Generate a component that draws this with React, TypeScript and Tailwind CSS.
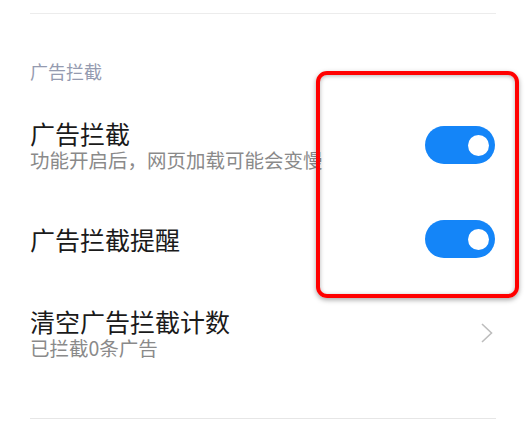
import React from 'react';

const font = { fontFamily: '"Noto Sans CJK SC", "Noto Sans", sans-serif' };

const Toggle = () => (
  <div className="w-[70px] h-[38px] rounded-full bg-[#1485f8] flex items-center justify-end pr-[6px]">
    <div className="w-[21px] h-[21px] rounded-full bg-white" />
  </div>
);

const Row = ({ title, sub, right }: { title: string; sub?: string; right: React.ReactNode }) => (
  <div className="h-[94px] flex items-center justify-between">
    <div className="flex flex-col">
      <span className="text-[25px] leading-[30px] text-[#1a1a1a]">{title}</span>
      {sub && <span className="text-[19.5px] leading-[24px] text-[#8a8a8a]">{sub}</span>}
    </div>
    {right}
  </div>
);

const Chevron = () => (
  <svg width="14" height="22" viewBox="0 0 14 22" className="mr-[1px]">
    <path d="M2 2 L11.5 11 L2 20" fill="none" stroke="#bdbdbd" strokeWidth="1.6" />
  </svg>
);

export default function App() {
  return (
    <div className="relative w-[526px] h-[434px] bg-white overflow-hidden" style={font}>
      <div className="px-[30px] pt-[13px]">
        <div className="h-px bg-[#ececec]" />
        <div className="mt-[45px] text-[18px] leading-[24px] text-[#959bb0]">广告拦截</div>
        <div className="mt-[15px] pr-[1px]">
          <Row title="广告拦截" sub="功能开启后，网页加载可能会变慢" right={<Toggle />} />
          <Row title="广告拦截提醒" right={<Toggle />} />
          <Row title="清空广告拦截计数" sub="已拦截0条广告" right={<Chevron />} />
        </div>
        <div className="mt-[38px] h-px bg-[#e6e6e6]" />
      </div>
      <div className="absolute left-[316px] top-[71px] w-[203px] h-[227px] rounded-[11px] border-[4px] border-[#ff0000] shadow-[0_2px_5px_rgba(0,0,0,0.35),inset_0_1px_4px_rgba(0,0,0,0.3)]" />
    </div>
  );
}
